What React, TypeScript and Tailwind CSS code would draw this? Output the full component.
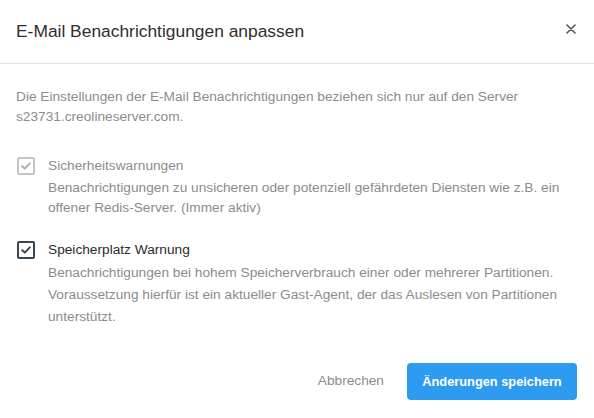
import React from "react";

function Check({ disabled }: { disabled?: boolean }) {
  return (
    <div
      className={`flex h-[18px] w-[18px] shrink-0 items-center justify-center rounded-[2px] border-2 ${
        disabled ? "border-[#c4c4c4]" : "border-[#3b4650]"
      }`}
    >
      <svg width="10" height="8" viewBox="0 0 10 8">
        <path
          d="M1.2 4.2 L3.8 6.6 L8.8 1.4"
          fill="none"
          stroke={disabled ? "#b0b0b0" : "#3b4650"}
          strokeWidth="2"
          strokeLinecap="round"
          strokeLinejoin="round"
        />
      </svg>
    </div>
  );
}

export default function App() {
  return (
    <div
      className="h-[418px] w-[594px] bg-white text-[#2b2b2b]"
      style={{ fontFamily: '"Liberation Sans", Arial, sans-serif' }}
    >
      <div className="flex h-[64px] items-center justify-between border-b border-[#e3e3e3] pl-4 pr-[18px]">
        <h1 className="text-[17.4px] text-[#2f2f2f]">E-Mail Benachrichtigungen anpassen</h1>
        <svg width="10" height="10" viewBox="0 0 10 10" className="-mt-[6px]">
          <path d="M1 1 L9 9 M9 1 L1 9" stroke="#555" strokeWidth="1.6" strokeLinecap="round" />
        </svg>
      </div>
      <div className="px-4 pt-[23px]">
        <p className="text-[13.7px] leading-[20px] text-[#8c8c8c]">
          Die Einstellungen der E-Mail Benachrichtigungen beziehen sich nur auf den Server
          <br />
          s23731.creolineserver.com.
        </p>
        <div className="mt-[30px] flex flex-col gap-[23px]">
          <div>
            <div className="flex h-[18px] items-center gap-[13px] pl-[1px]">
              <Check disabled />
              <span className="text-[13.7px] text-[#8c8c8c]">Sicherheitswarnungen</span>
            </div>
            <p className="mt-[3px] pl-[32px] text-[13.7px] leading-[20px] text-[#8c8c8c]">
              Benachrichtigungen zu unsicheren oder potenziell gefährdeten Diensten wie z.B. ein
              <br />
              offener Redis-Server. (Immer aktiv)
            </p>
          </div>
          <div>
            <div className="flex h-[18px] items-center gap-[13px] pl-[1px]">
              <Check />
              <span className="text-[13.7px] text-[#2b2b2b]">Speicherplatz Warnung</span>
            </div>
            <p className="mt-[3px] pl-[32px] text-[13.7px] leading-[22px] text-[#8c8c8c]">
              Benachrichtigungen bei hohem Speicherverbrauch einer oder mehrerer Partitionen.
              <br />
              Voraussetzung hierfür ist ein aktueller Gast-Agent, der das Auslesen von Partitionen
              <br />
              unterstützt.
            </p>
          </div>
        </div>
      </div>
      <div className="mt-[35px] flex items-center justify-end gap-[23px] pr-[17px]">
        <button className="text-[13.7px] text-[#8c8c8c]">Abbrechen</button>
        <button className="h-[37px] w-[170px] rounded-[4px] bg-[#2d9cf0] text-[12.8px] font-bold text-white">
          Änderungen speichern
        </button>
      </div>
    </div>
  );
}
